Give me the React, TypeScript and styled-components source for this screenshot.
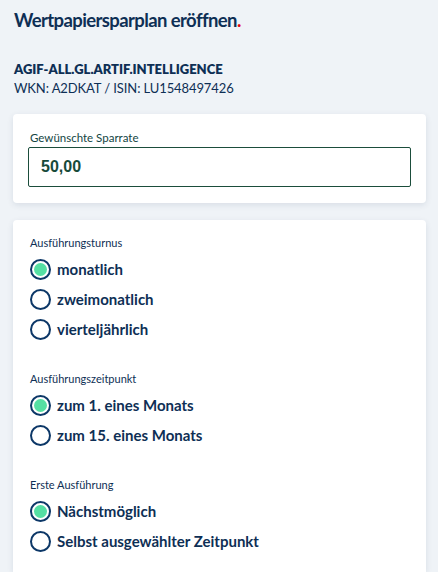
import React from "react";
import styled, { createGlobalStyle } from "styled-components";

const Global = createGlobalStyle`
  html, body { margin: 0; padding: 0; background: #eff3f7; }
  body { font-family: Lato, "Noto Sans", sans-serif; -webkit-font-smoothing: antialiased; }
  * { box-sizing: border-box; }
`;

const Page = styled.div`
  width: 438px;
  height: 572px;
  overflow: hidden;
  padding: 8px 12px 0 13px;
  display: flex;
  flex-direction: column;
`;

const Title = styled.h1`
  margin: 0 0 0 1px;
  font-size: 18.5px;
  line-height: 24px;
  font-weight: 700;
  letter-spacing: -0.6px;
  color: #0e2f55;
`;

const Dot = styled.span`
  color: #e30613;
`;

const Fund = styled.div`
  margin: 28px 0 0 1px;
  display: flex;
  flex-direction: column;
  color: #0e2f55;
  font-size: 13px;
  line-height: 19px;
`;

const FundName = styled.div`
  font-weight: 800;
`;

const FundIds = styled.div`
  font-weight: 400;
  letter-spacing: -0.1px;
`;

const Card = styled.section<{ $pad?: string }>`
  background: #fff;
  border-radius: 4px;
  box-shadow: 0 2px 6px rgba(20, 40, 80, 0.1);
  padding: ${(p) => p.$pad ?? "16px 15px 16px 15px"};
  display: flex;
  flex-direction: column;
`;

const FirstCard = styled(Card)`
  margin-top: 16px;
`;

const SecondCard = styled(Card)`
  margin-top: 17px;
  flex: 1;
  border-radius: 4px 4px 0 0;
`;

const FieldLabel = styled.label`
  margin-left: 2px;
  font-size: 11.5px;
  line-height: 15px;
  color: #134543;
  margin-bottom: 2px;
`;

const Input = styled.div`
  height: 40px;
  border: 1px solid #1b4d3b;
  border-radius: 2px;
  display: flex;
  align-items: center;
  padding-left: 12px;
  font-family: "Liberation Sans", Arial, sans-serif;
  font-weight: 700;
  font-size: 16px;
  color: #174a3a;
`;

const Section = styled.div`
  display: flex;
  flex-direction: column;
  & + & {
    margin-top: 28px;
  }
`;

const SectionLabel = styled.div`
  font-size: 11px;
  line-height: 14px;
  color: #0e2f55;
  margin-bottom: 4px;
`;

const Option = styled.div`
  height: 30px;
  display: flex;
  align-items: center;
  gap: 6px;
  font-size: 15px;
  font-weight: 700;
  color: #0e2f55;
`;

const Radio = styled.span<{ $checked?: boolean }>`
  width: 21px;
  height: 21px;
  border-radius: 50%;
  border: 2.5px solid #0c3767;
  display: flex;
  align-items: center;
  justify-content: center;
  flex-shrink: 0;
  &::after {
    content: "";
    width: 13px;
    height: 13px;
    border-radius: 50%;
    background: ${(p) => (p.$checked ? "#55dfa3" : "transparent")};
  }
`;

const groups = [
  { label: "Ausführungsturnus", options: ["monatlich", "zweimonatlich", "vierteljährlich"] },
  { label: "Ausführungszeitpunkt", options: ["zum 1. eines Monats", "zum 15. eines Monats"] },
  { label: "Erste Ausführung", options: ["Nächstmöglich", "Selbst ausgewählter Zeitpunkt"] },
];

export default function App() {
  return (
    <>
      <Global />
      <Page>
        <Title>
          Wertpapiersparplan eröffnen<Dot>.</Dot>
        </Title>
        <Fund>
          <FundName>AGIF-ALL.GL.ARTIF.INTELLIGENCE</FundName>
          <FundIds>WKN: A2DKAT / ISIN: LU1548497426</FundIds>
        </Fund>
        <FirstCard>
          <FieldLabel>Gewünschte Sparrate</FieldLabel>
          <Input>50,00</Input>
        </FirstCard>
        <SecondCard $pad="16px 17px">
          {groups.map((g) => (
            <Section key={g.label}>
              <SectionLabel>{g.label}</SectionLabel>
              {g.options.map((o, i) => (
                <Option key={o}>
                  <Radio $checked={i === 0} />
                  {o}
                </Option>
              ))}
            </Section>
          ))}
        </SecondCard>
      </Page>
    </>
  );
}
